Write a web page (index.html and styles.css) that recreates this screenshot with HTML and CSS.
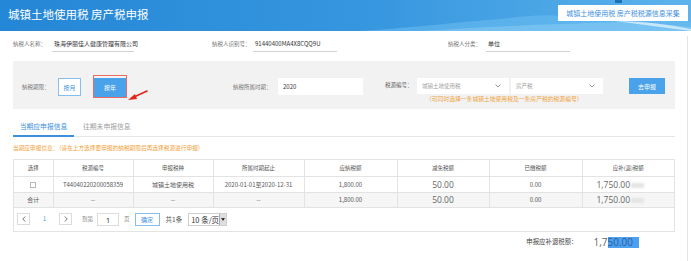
FILE: index.html
```html
<!DOCTYPE html>
<html lang="zh-CN">
<head>
  <meta charset="UTF-8" />
  <title>城镇土地使用税 房产税申报</title>
  <link rel="stylesheet" href="styles.css">
</head>
<body>
  <div class="banner">
    <svg class="banner-bg" width="691" height="31" viewBox="0 0 691 31">
      <defs>
        <linearGradient id="sky" x1="0" y1="0" x2="1" y2="0">
          <stop offset="0" stop-color="#2486d6"/>
          <stop offset="0.55" stop-color="#3797df"/>
          <stop offset="1" stop-color="#5db3ec"/>
        </linearGradient>
      </defs>
      <rect width="691" height="31" fill="url(#sky)"/>
      <path d="M360 31 C420 27 460 22 500 19 C520 17 540 14 560 16 C590 19 620 12 650 15 C670 17 685 20 691 22 L691 31 Z" fill="#6cbdf1" opacity="0.55"/>
      <path d="M420 31 C470 28 520 25 560 24 C600 23 630 20 660 24 L691 27 L691 31 Z" fill="#8ccdf5" opacity="0.5"/>
      <path d="M615 21 C640 24 665 28 691 31 L691 29 C670 25 645 21 615 21 Z" fill="#d9effc" opacity="0.8"/>
      <rect x="615" y="0" width="7" height="3" fill="#1d6fb8"/>
    </svg>
    <h1>城镇土地使用税 房产税申报</h1>
    <div class="collect">城镇土地使用税 房产税税源信息采集</div>
  </div>

  <div class="main">
    <div class="info">
      <div class="field f1"><span class="lbl l1">纳税人名称：</span><span class="val">珠海伊丽佳人健康管理有限公司</span></div>
      <div class="field f2"><span class="lbl l2">纳税人识别号：</span><span class="val">91440400MA4X8CQQ9U</span></div>
      <div class="field f3"><span class="lbl l3">纳税人分类：</span><span class="val">单位</span></div>
    </div>

    <div class="panel">
      <span class="plbl pl1">纳税期限：</span>
      <button class="btn-line">按月</button>
      <span class="mark">
        <button class="btn-blue">按年</button>
        <svg class="arrow" width="22" height="16" viewBox="0 0 22 16">
          <path d="M20 3 L7 9" stroke="#e3261c" stroke-width="1.6" stroke-linecap="round"/>
          <path d="M1 12 L8 6 L10 11 Z" fill="#e3261c"/>
        </svg>
      </span>
      <span class="plbl pl2">纳税所属时期：</span>
      <input class="year" value="2020" />
      <span class="plbl pl3">税源编号：</span>
      <div class="source">
        <div class="selects">
          <div class="sel">城镇土地使用税<svg width="6" height="4" viewBox="0 0 6 4"><path d="M0.5 0.5 L3 3 L5.5 0.5" fill="none" stroke="#888" stroke-width="0.9"/></svg></div>
          <div class="sel">房产税<svg width="6" height="4" viewBox="0 0 6 4"><path d="M0.5 0.5 L3 3 L5.5 0.5" fill="none" stroke="#888" stroke-width="0.9"/></svg></div>
        </div>
        <div class="note">（可同时选择一条城镇土地使用税及一条房产税的税源编号）</div>
      </div>
      <button class="btn-blue go">去申报</button>
    </div>

    <div class="tabs">
      <div class="tab on">当期应申报信息</div>
      <div class="tab">往期未申报信息</div>
    </div>

    <div class="notice">当期应申报信息：（请在上方选择要申报的纳税期限后再选择税源进行申报）</div>

    <div class="grid">
      <table>
        <colgroup>
          <col style="width:39px"><col style="width:80px"><col style="width:80px"><col style="width:91px">
          <col style="width:93px"><col style="width:92px"><col style="width:93px"><col style="width:92px">
        </colgroup>
        <tr>
          <th>选择</th><th>税源编号</th><th>申报税种</th><th>所属时期起止</th>
          <th>应纳税额</th><th>减免税额</th><th>已缴税额</th><th>应补(退)税额</th>
        </tr>
        <tr>
          <td><span class="check"></span></td>
          <td>T44040220200058359</td>
          <td>城镇土地使用税</td>
          <td>2020-01-01至2020-12-31</td>
          <td>1,800.00</td>
          <td class="big">50.00</td>
          <td>0.00</td>
          <td class="big due">1,750.00<span class="smudge"></span></td>
        </tr>
        <tr class="sum">
          <td>合计</td><td>--</td><td>--</td><td>--</td>
          <td>1,800.00</td>
          <td class="big">50.00</td>
          <td>0.00</td>
          <td class="big due">1,750.00<span class="smudge"></span></td>
        </tr>
      </table>
      <div class="pager">
        <span class="pg-btn"><svg width="4" height="6" viewBox="0 0 4 6"><path d="M3.2 0.5 L0.8 3 L3.2 5.5" fill="none" stroke="#666" stroke-width="0.9"/></svg></span>
        <span class="pg-num">1</span>
        <span class="pg-btn"><svg width="4" height="6" viewBox="0 0 4 6"><path d="M0.8 0.5 L3.2 3 L0.8 5.5" fill="none" stroke="#666" stroke-width="0.9"/></svg></span>
        <span class="pg-txt goto">到第</span>
        <span class="pg-input">1</span>
        <span class="pg-txt page">页</span>
        <span class="pg-ok">确定</span>
        <span class="pg-count">共1条</span>
        <span class="pg-size">10 条/页<span class="pg-drop"><svg width="4" height="3" viewBox="0 0 4 3"><path d="M0 0 L4 0 L2 3 Z" fill="#333"/></svg></span></span>
      </div>
    </div>

    <div class="total">
      <span class="t-lbl">申报应补退税额：</span>
      <span class="t-val">1,7<span class="hl">50.00</span></span>
    </div>
  </div>
</body>
</html>
```

FILE: styles.css
```css
* {
  box-sizing: border-box;
}
body {
  margin: 0;
  width: 691px;
  height: 261px;
  overflow: hidden;
  font-family: "Noto Sans CJK SC", "Noto Sans", sans-serif;
  color: #555;
  background: #fff;
}
.banner {
  position: relative;
  height: 31px;
  display: flex;
  align-items: center;
  justify-content: space-between;
  padding: 0 3px 0 8px;
  overflow: hidden;
}
.banner-bg {
  position: absolute;
  left: 0;
  top: 0;
}
.banner h1 {
  position: relative;
  margin: -4px 0 0;
  font-size: 11.5px;
  font-weight: normal;
  color: #fff;
}
.collect {
  position: relative;
  width: 130px;
  height: 16px;
  margin-top: -6px;
  background: #fff;
  color: #3d8fdc;
  font-size: 7px;
  line-height: 16px;
  text-align: center;
}
.main {
  width: 688px;
  height: 230px;
  padding: 0 12px 0 13px;
  border-right: 1px solid #e4e4e4;
}

/* 纳税人信息 */
.info {
  display: flex;
  height: 16px;
  margin-top: 5px;
}
.field {
  display: flex;
  align-items: flex-end;
}
.f1 { width: 199px; }
.f2 { width: 236px; }
.lbl {
  font-size: 5.5px;
  line-height: 15px;
  color: #777;
  white-space: nowrap;
}
.l1 { width: 39px; }
.l2 { width: 41px; }
.l3 { width: 38px; }
.val {
  width: 84px;
  padding-left: 2px;
  font-size: 6px;
  line-height: 15px;
  color: #333;
  border-bottom: 1px solid #d2d2d2;
  white-space: nowrap;
}
.f1 .val { width: 82px; }

/* 查询条件 */
.panel {
  display: flex;
  align-items: flex-start;
  height: 48px;
  margin-top: 9px;
  padding: 17px 0 0 9px;
  background: #f2f2f2;
}
.plbl {
  font-size: 5.5px;
  line-height: 18px;
  color: #777;
  white-space: nowrap;
}
.pl1 { width: 36px; }
.pl2 { width: 45px; margin-left: 106px; }
.pl3 { width: 31px; margin-left: 22px; line-height: 14px; color: #666; }
button {
  font-family: inherit;
  padding: 0;
  cursor: pointer;
}
.btn-line {
  width: 23px;
  height: 18px;
  background: #fff;
  border: 1px solid #86bfee;
  color: #3d8fdc;
  font-size: 6px;
}
.btn-blue {
  background: #4aa3ea;
  border: none;
  color: #fff;
  font-size: 6px;
}
.mark {
  position: relative;
  display: flex;
  margin: -3px 0 0 12px;
  padding-top: 2px;
  border: 1px solid #ec6a62;
}
.mark .btn-blue {
  width: 32px;
  height: 19px;
}
.arrow {
  position: absolute;
  left: 33px;
  top: 12px;
}
.year {
  width: 85px;
  height: 17px;
  padding: 0 0 0 5px;
  border: none;
  background: #fff;
  font-family: inherit;
  font-size: 6px;
  color: #333;
}
.source {
  margin-left: 1px;
}
.selects {
  display: flex;
  gap: 2px;
}
.sel {
  display: flex;
  align-items: center;
  justify-content: space-between;
  width: 92px;
  height: 16px;
  padding: 0 8px 0 5px;
  background: #fff;
  font-size: 5.5px;
  color: #a0a0a0;
}
.note {
  margin-top: 1px;
  padding-left: 9px;
  font-size: 5.8px;
  line-height: 8px;
  color: #f0a23a;
  white-space: nowrap;
}
.go {
  width: 36px;
  height: 16px;
  margin-left: 26px;
}

/* 页签 */
.tabs {
  display: flex;
  height: 20px;
  margin-top: 8px;
  border-bottom: 1px solid #e6e6e6;
}
.tab {
  padding: 0 9px;
  font-size: 6.8px;
  line-height: 18px;
  color: #a0a0a0;
}
.tab.on {
  width: 61px;
  height: 20px;
  margin-bottom: -1px;
  padding: 0;
  text-align: center;
  color: #3d8fdc;
  border-bottom: 2px solid #3d8fdc;
}
.notice {
  margin-top: 5px;
  font-size: 5.7px;
  line-height: 12px;
  color: #f0a23a;
  white-space: nowrap;
}

/* 表格 */
.grid {
  margin-top: 5px;
  border: 1px solid #e3e3e3;
}
table {
  width: 100%;
  border-collapse: collapse;
  table-layout: fixed;
}
th, td {
  padding: 0;
  text-align: center;
  white-space: nowrap;
  border-left: 1px solid #e3e3e3;
  border-bottom: 1px solid #e3e3e3;
  color: #555;
}
th:first-child, td:first-child {
  border-left: none;
}
th {
  height: 16px;
  font-size: 5.5px;
  font-weight: normal;
}
td {
  height: 16px;
  font-size: 6px;
}
.sum td {
  background: #f6f6f6;
  height: 15px;
}
td.big {
  font-family: "Open Sans", "Liberation Sans", sans-serif;
  font-size: 8.5px;
  color: #666;
}
td.due {
  text-align: left;
  padding-left: 14px;
}
.smudge {
  display: inline-block;
  width: 13px;
  height: 5px;
  margin-left: 1px;
  background: #e4e4e4;
  filter: blur(1px);
}
.check {
  display: inline-block;
  width: 6px;
  height: 6px;
  border: 1px solid #b8b8b8;
  background: #fff;
  vertical-align: middle;
}
.pager {
  display: flex;
  align-items: center;
  height: 24px;
  padding-left: 3px;
  border-top: 1px solid #e3e3e3;
  margin-top: -1px;
}
.pg-btn {
  display: flex;
  align-items: center;
  justify-content: center;
  width: 13px;
  height: 12px;
  border: 1px solid #dcdcdc;
}
.pg-num {
  width: 29px;
  text-align: center;
  font-size: 5.5px;
  color: #3d8fdc;
}
.pg-txt {
  font-size: 5.5px;
  color: #888;
}
.goto { margin-left: 10px; }
.page { margin-left: 5px; }
.pg-input {
  width: 22px;
  height: 13px;
  margin-left: 4px;
  border: 1px solid #dcdcdc;
  font-family: "Open Sans", "Liberation Sans", sans-serif;
  font-size: 8px;
  line-height: 11px;
  text-align: center;
  color: #333;
}
.pg-ok {
  width: 25px;
  height: 13px;
  margin-left: 5px;
  border: 1px solid #86bfee;
  font-size: 6px;
  line-height: 11px;
  text-align: center;
  color: #3d8fdc;
}
.pg-count {
  margin-left: 6px;
  font-size: 6.5px;
  color: #555;
}
.pg-size {
  display: flex;
  align-items: center;
  justify-content: space-between;
  width: 39px;
  height: 13px;
  margin-left: 6px;
  padding-left: 2px;
  border: 1px solid #cfcfcf;
  font-size: 7.5px;
  color: #333;
}
.pg-drop {
  display: flex;
  align-items: center;
  justify-content: center;
  width: 7px;
  height: 11px;
  background: #dedede;
  border-left: 1px solid #aaa;
}

/* 合计 */
.total {
  display: flex;
  align-items: center;
  justify-content: flex-end;
  height: 18px;
  margin-top: 1px;
  padding-right: 36px;
}
.t-lbl {
  margin-right: 16px;
  font-size: 6.4px;
  color: #444;
}
.t-val {
  font-family: "Open Sans", "Liberation Sans", sans-serif;
  font-size: 10px;
  color: #666;
}
.hl {
  display: inline-block;
  padding-right: 6px;
  line-height: 11px;
  background: #4d9ff0;
  color: #2a5f9e;
}
```
